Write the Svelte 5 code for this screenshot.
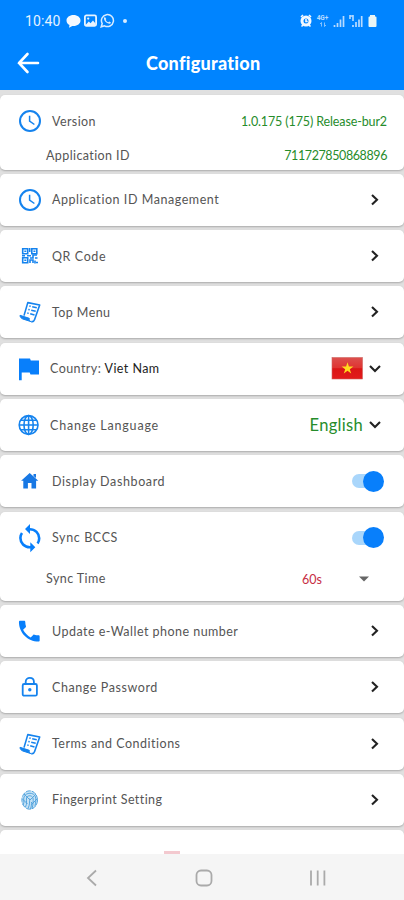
<script>
  const rows = [
    { icon: 'clock', label: 'Application ID Management', ls: 0.55, end: 'next' },
    { icon: 'qr', label: 'QR Code', ls: 0.6, end: 'next' },
    { icon: 'doc', label: 'Top Menu', ls: 0.42, end: 'next' },
    { icon: 'flag', label: 'Country:', value: 'Viet Nam', ls: 0.44, end: 'country', wide: true },
    { icon: 'globe', label: 'Change Language', ls: 0.8, end: 'language', wide: true },
    { icon: 'home', label: 'Display Dashboard', ls: 0.62, end: 'toggle' },
    { icon: 'sync', label: 'Sync BCCS', ls: 0.62, end: 'toggle', time: true },
    { icon: 'phone', label: 'Update e-Wallet phone number', ls: 0.47, end: 'next' },
    { icon: 'lock', label: 'Change Password', ls: 0.58, end: 'next' },
    { icon: 'doc', label: 'Terms and Conditions', ls: 0.5, end: 'next' },
    { icon: 'finger', label: 'Fingerprint Setting', ls: 0.42, end: 'next' },
  ];
</script>

{#snippet icon(name)}
  <svg class="icon" width="24" height="30" viewBox="0 0 24 30" fill="none" stroke="#1583ee" stroke-width="2">
    {#if name === 'clock'}
      <circle cx="12" cy="15" r="10" />
      <path d="M11.6 9.8v5.4l4.8 3.3" stroke-width="1.5" />
    {:else if name === 'qr'}
      <g stroke-width="1.6">
        <path d="M4.7 7.7h5v5h-5zM13.8 7.7h5v5h-5zM4.7 16.8h5v5h-5z" />
        <path d="M6.3 10.2h2M15.4 10.2h2M6.3 19.3h2M4 14.8h3M9 14.8h4M11.7 7v4M12 17h3v-3h4M12 22v-3h3v3M17 17h2.5M17 19.5v3M18 21.5h2" />
      </g>
    {:else if name === 'doc'}
      <g stroke-width="1.6" stroke-linejoin="round">
        <path d="M6 18.6L9.800 5.600 21.700 8 16.600 22.500c-.6 1.800-1.800 2.400-3.300 2" />
        <path d="M2 18.300l9.300 3c-.3 1.800.3 3 1.900 3.400L4.800 22C3 21.300 2 20 2 18.300z" fill="#1583ee" stroke-width="1" />
        <path d="M11.300 9l1.400.3M14.200 9.700l4.600 1M10.300 12.500l1.400.3M13.200 13.200l4.500 1M9.300 16l1.400.4M12.200 16.800l4.300 1.200" stroke-width="1.500" />
      </g>
    {:else if name === 'flag'}
      <path d="M1 4.500H12l.8 2H21v14h-8.500l-.8-2H3.700v7.800H1z" fill="#087ffb" stroke="none" />
    {:else if name === 'globe'}
      <g transform="translate(-1.4 0)" stroke-width="1.6">
        <circle cx="12" cy="15" r="9.4" />
        <ellipse cx="12" cy="15" rx="4.6" ry="9.4" />
        <path d="M12 5.6v18.8M2.8 15h18.4M4.3 10.2h15.4M4.3 19.8h15.4" />
      </g>
    {:else if name === 'home'}
      <path d="M11.7 7l8.6 7.8h-2.2v7.8h-4.6V17h-3.6v5.6H5.3v-7.8H3.1L11.7 7zM15.5 8h2.5v4l-2.5-2z" fill="#1878e4" stroke="none" />
    {:else if name === 'sync'}
      <g stroke="#087ffb" stroke-width="2.6">
        <path d="M9.5 6.2h2.2c5.5 0 9.5 4.2 9.500 9.100 0 2-.6 3.700-1.600 5.100M14 24.200h-2.200c-5.400 0-9.400-4.200-9.400-9.100 0-2 .5-3.700 1.600-5.100" />
        <path d="M12 1v10L7 6.100zM12.300 19.200v10l5-5z" fill="#087ffb" stroke="none" />
      </g>
    {:else if name === 'phone'}
      <path transform="translate(-2.500 1.400) scale(1.150)" d="M6.600 10.800c1.400 2.800 3.800 5.100 6.600 6.600l2.200-2.200c.3-.3.7-.4 1-.2 1.100.4 2.300.6 3.600.6.6 0 1 .4 1 1V20c0 .6-.4 1-1 1C10.600 21 3 13.400 3 4c0-.6.4-1 1-1h3.500c.6 0 1 .4 1 1 0 1.300.2 2.500.6 3.600.1.3 0 .7-.2 1z" fill="#087ffb" stroke="none" />
    {:else if name === 'lock'}
      <rect x="4.700" y="12" width="14.200" height="11.700" rx="1.500" stroke-width="1.800" />
      <path d="M7.700 12V9.800c0-5.200 8.200-5.200 8.200 0V12" stroke-width="1.800" />
      <circle cx="11.800" cy="17.800" r="1.700" fill="#1583ee" stroke="none" />
    {:else if name === 'finger'}
      <g stroke="#55a5de" stroke-width="1">
        <ellipse cx="11.700" cy="15" rx="7.800" ry="9.200" fill="#c7e3f6" stroke-dasharray="5 1" />
        <path d="M5 20c2-3 0-5 1-8 2-5 10-5 11.500 0 .6 2 .2 6-.5 9M7.500 22c2-4 .500-6 1-9 1-3 5.500-3 6.500 0 .5 3 0 7-1 10.500M10 23.500c2-4 1.500-7 1.700-10M12.500 24c1-3 1-5 1-7M6 9l6 6 6-6M4.500 14l5 5M19 14l-5 5" />
      </g>
    {/if}
  </svg>
{/snippet}

{#snippet down()}
  <svg class="down" width="14" height="10" viewBox="0 0 14 10"><path d="M2 2l5 5 5-5" fill="none" stroke="#222" stroke-width="2.100" /></svg>
{/snippet}

<div class="screen">
  <header>
    <div class="status">
      <span class="time">10:40</span>
      <svg width="15" height="14" viewBox="0 0 15 14"><path d="M7.500 1C3.500 1 .5 3.400.5 6.500c0 2 1.200 3.600 3 4.500L3 13.800 6.300 12h1.200c4 0 7-2.400 7-5.500S11.500 1 7.500 1z" fill="#f4f9ff" /></svg>
      <svg class="pic" width="13" height="13" viewBox="0 0 13 13"><rect x=".9" y="1.400" width="11.200" height="10.400" rx="1.500" fill="none" stroke="#e8f4ff" stroke-width="1.800" /><path d="M2 10.500l2.800-3 1.700 1.700L9 6.500l2.500 3v1.500H2z" fill="#e8f4ff" /><circle cx="4.200" cy="4.600" r="1.100" fill="#e8f4ff" /></svg>
      <svg class="wa" width="15" height="15" viewBox="0 0 15 15"><path d="M1.200 13.800l1-3.300a6 6 0 1 1 2.300 2.300z" fill="none" stroke="#d9ecff" stroke-width="1.500" /><path d="M5 4l1.300 2-.6.900c.7 1.200 1.500 1.900 2.600 2.400l.9-.9 1.800 1c-.3 1.300-1.500 1.600-2.700 1.200C6 9.800 4.500 8 4 6c-.1-.8.2-1.700 1-2z" fill="#d9ecff" /></svg>
      <i class="dot"></i>
      <div class="system">
        <svg width="12" height="14" viewBox="0 0 12 14"><circle cx="6" cy="7" r="4" fill="none" stroke="#f2f8ff" stroke-width="3" /><path d="M6 5v2.500h1.700M1 3l2-2M11 3L9 1M1.500 12.500L3 11M10.500 12.500L9 11" fill="none" stroke="#f2f8ff" stroke-width="1.600" /></svg>
        <span class="net"><b>4G+</b><svg width="8" height="5" viewBox="0 0 8 5"><path d="M2.500 4.500V.5L1 2M5.500.5v4L7 3" fill="none" stroke="#a5d0ff" stroke-width=".8" /></svg></span>
        <svg width="12" height="13" viewBox="0 0 12 13" stroke="#b8dbff" stroke-width="1.700"><path d="M1.500 13v-2M4.500 13V9M7.500 13V5.500M10.500 13V2" /></svg>
        <svg width="14" height="13" viewBox="0 0 14 13" stroke="#b8dbff" stroke-width="1.700"><path d="M4 13v-2M7 13V8M10 13V5.500M12.700 13V2" /><path d="M1 1v4M4 1v6M1 2h3" stroke-width="1.600" /></svg>
        <svg class="battery" width="9" height="13" viewBox="0 0 9 13"><path d="M2 2.500V1h5v1.500h.5q1 0 1 1V12q0 1-1 1h-6q-1 0-1-1V3.500q0-1 1-1z" fill="#e9f5f5" /></svg>
      </div>
    </div>
    <div class="title">
      <svg width="24" height="24" viewBox="0 0 24 24"><path d="M11.500 3L3 12l8.500 9M3 12h19" fill="none" stroke="#fff" stroke-width="2.600" stroke-linecap="round" /></svg>
      <h1>Configuration</h1>
    </div>
  </header>

  <main>
    <section class="card version">
      <div class="line first">
        {@render icon('clock')}
        <span class="label" style:letter-spacing="0.4px">Version</span>
        <span class="green v1">1.0.175 (175) Release-bur2</span>
      </div>
      <div class="line second">
        <span class="label" style:letter-spacing="0.4px">Application ID</span>
        <span class="green v2">711727850868896</span>
      </div>
    </section>

    {#each rows as row}
      <section class="card">
        <div class="line">
          {@render icon(row.icon)}
          <span class="label" class:wide={row.wide} style:letter-spacing="{row.ls}px">{row.label}{#if row.value}{' '}<strong>{row.value}</strong>{/if}</span>
          <div class="end">
            {#if row.end === 'next'}
              <svg class="next" width="10" height="14" viewBox="0 0 10 14"><path d="M2 2l5 4.800-5 4.800" fill="none" stroke="#222" stroke-width="2.100" /></svg>
            {:else if row.end === 'country'}
              <svg width="32" height="23" viewBox="0 0 32 23">
                <defs><linearGradient id="red" x2="0" y2="1"><stop stop-color="#dc4f4d" /><stop offset=".48" stop-color="#df3431" /><stop offset=".52" stop-color="#db1515" /><stop offset="1" stop-color="#e21b1b" /></linearGradient></defs>
                <rect x="1" y=".5" width="30.500" height="21.500" fill="url(#red)" stroke="#cf6460" stroke-width=".6" />
                <path d="M16.500 5.200l1.400 4.300h4.500l-3.600 2.700 1.400 4.300-3.700-2.700-3.700 2.700 1.400-4.300-3.600-2.700h4.500z" fill="#ffdc1e" />
              </svg>
              {@render down()}
            {:else if row.end === 'language'}
              <span class="english">English</span>
              {@render down()}
            {:else}
              <span class="toggle"><i></i></span>
            {/if}
          </div>
        </div>
        {#if row.time}
          <div class="line sync-time">
            <span class="label" style:letter-spacing="0.42px">Sync Time</span>
            <span class="seconds">60s</span>
            <svg width="10" height="6" viewBox="0 0 10 6"><path d="M0 .5h10L5 5.500z" fill="#666" /></svg>
          </div>
        {/if}
      </section>
    {/each}
    <section class="card last"><i></i></section>
  </main>

  <nav>
    <svg width="12" height="18" viewBox="0 0 12 18"><path d="M10 1.500L2 9l8 7.500" /></svg>
    <svg width="18" height="18" viewBox="0 0 18 18"><rect x="1.500" y="1.500" width="15" height="15" rx="4.500" /></svg>
    <svg width="18" height="18" viewBox="0 0 18 18"><path d="M2 1.500v15M8.700 1.500v15M15.400 1.500v15" /></svg>
  </nav>
</div>

<style>
  :global(body) { margin: 0; }
  .screen { width: 404px; height: 900px; overflow: hidden; display: flex; flex-direction: column; font-family: Lato, "Open Sans", sans-serif; background: #e0e0e0; }
  svg { display: block; flex: none; }
  header { height: 90px; flex: none; background: #0084ff; color: #fff; }
  .status { height: 40px; display: flex; align-items: center; padding: 1px 27px 0 25px; box-sizing: border-box; }
  .time { font: 14px Roboto, sans-serif; width: 41px; letter-spacing: .1px; color: #e5f2ff; }
  .pic { margin-left: 3px; }
  .wa { margin-left: 3px; }
  .dot { width: 4px; height: 4px; border-radius: 50%; background: #d9ecff; margin-left: 8px; }
  .system { margin-left: auto; display: flex; align-items: center; gap: 4px; }
  .net { width: 13px; display: flex; flex-direction: column; align-items: center; }
  .net b { font: bold 6.500px/7px Roboto, sans-serif; color: #b8dbff; }
  .battery { margin-left: 1px; }
  .title { height: 46px; display: flex; align-items: center; padding-left: 16px; }
  h1 { margin: 0 0 0 106px; font-size: 18px; font-weight: 900; line-height: 24px; letter-spacing: .27px; white-space: nowrap; }
  main { flex: 1; min-height: 0; overflow: hidden; display: flex; flex-direction: column; gap: 4.270px; padding-top: 4.500px; }
  .card { flex: none; background: #fff; border-radius: 5px; box-shadow: 0 1px 2px #aaa; box-sizing: border-box; }
  .line { height: 52px; display: flex; align-items: center; padding: 0 17px 0 18px; }
  .label { margin-left: 10px; padding-top: 1px; font-size: 12.500px; line-height: 18px; color: #555; white-space: nowrap; }
  .label.wide { margin-left: 8px; }
  strong { font-weight: 400; color: #222; }
  .version { height: 75.200px; }
  .first { height: 53px; }
  .second { height: 16px; }
  .second .label, .sync-time .label { margin-left: 28px; padding-top: 0; }
  .green { margin-left: auto; color: #268c2b; font-size: 12.500px; white-space: nowrap; }
  .v1 { letter-spacing: -.12px; }
  .v2 { letter-spacing: -.4px; }
  .end { margin-left: auto; display: flex; align-items: center; }
  .next { margin-right: 7px; }
  .down { margin: 0 5px; }
  .english { font-size: 16.500px; color: #268c2b; letter-spacing: .3px; }
  .toggle { width: 32px; height: 14px; margin-right: 3px; display: flex; align-items: center; justify-content: flex-end; background: linear-gradient(90deg, #a9d6fb 70%, transparent 70%); border-radius: 7px; }
  .toggle i { width: 21px; height: 21px; border-radius: 50%; background: #087ffb; flex: none; }
  .sync-time { height: 31px; padding-bottom: 6.300px; }
  .seconds { margin-left: auto; color: #c72d43; font-size: 12.500px; margin-right: 37px; }
  .sync-time svg { margin-right: 18px; }
  .last { height: 80px; }
  .last i { display: block; width: 16px; height: 8px; margin: 21px 0 0 164px; background: #f3c9cf; }
  nav { height: 46px; flex: none; background: #f5f5f5; display: flex; align-items: center; justify-content: space-between; padding: 1px 77px 0 86px; box-sizing: border-box; }
  nav svg { fill: none; stroke: #aaa; stroke-width: 1.800; }
</style>
